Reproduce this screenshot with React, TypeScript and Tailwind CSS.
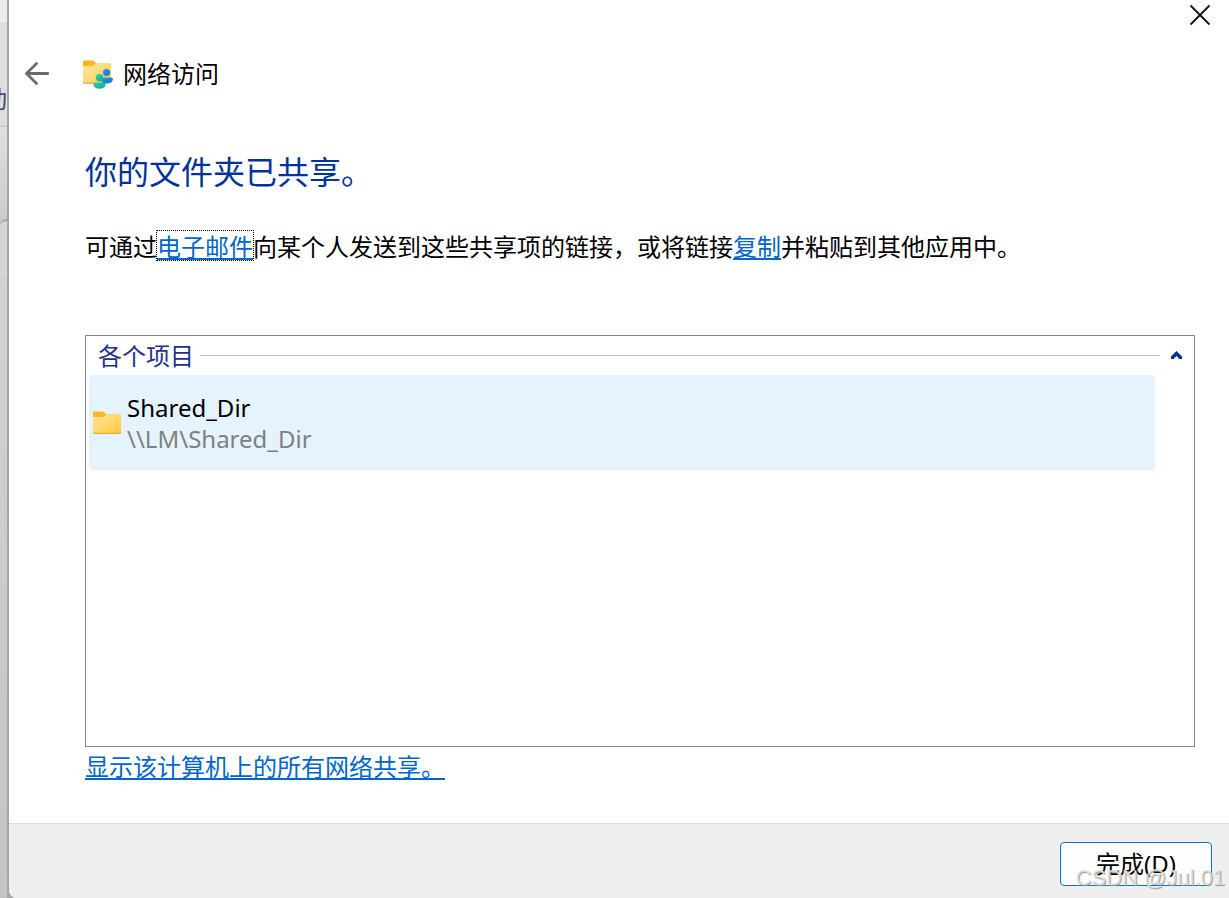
import React from 'react';

function SharedFolderIcon() {
  return (
    <svg viewBox="0 0 31 29" className="h-[29px] w-[31px] shrink-0" aria-hidden="true">
      <defs>
        <linearGradient id="sharedFront" x1="0" y1="0" x2="1" y2="1">
          <stop offset="0" stopColor="#ffe9a6" />
          <stop offset="1" stopColor="#fdcb4c" />
        </linearGradient>
        <linearGradient id="teal" x1="0" y1="0" x2="1" y2="1">
          <stop offset="0" stopColor="#2fd3a5" />
          <stop offset="1" stopColor="#14a493" />
        </linearGradient>
        <linearGradient id="azure" x1="0" y1="0" x2="1" y2="1">
          <stop offset="0" stopColor="#2b9cf0" />
          <stop offset="1" stopColor="#0a72cf" />
        </linearGradient>
      </defs>
      <path d="M0 1.5Q0 .5 1 .5H9.5Q10.500 .5 11.200 1.300L13 3.500H27Q28 3.500 28 4.500V10H0Z" fill="#fbb71c" />
      <path d="M0 6H9.500Q10.500 6 11.300 5.200L12.200 4.200Q12.900 3.500 14 3.500H27Q28 3.500 28 4.500V22Q28 23 27 23H1Q0 23 0 22Z" fill="url(#sharedFront)" />
      <path d="M0 22Q0 23.200 1 23.200H12" fill="none" stroke="#d89b2b" strokeWidth="1" />
      <circle cx="23.500" cy="12.500" r="3.600" fill="url(#azure)" />
      <path d="M17.500 19.500Q17.500 17.500 19.500 17.500H28Q30 17.500 30 19.500Q29 23.500 23.700 23.500Q18.500 23.500 17.500 19.500Z" fill="url(#azure)" />
      <circle cx="16.500" cy="17.700" r="3.700" fill="url(#teal)" />
      <path d="M10.200 24.500Q10.200 22.500 12.200 22.500H20.800Q22.800 22.500 22.800 24.500Q21.500 28.800 16.500 28.800Q11.500 28.800 10.200 24.500Z" fill="url(#teal)" />
    </svg>
  );
}

function FolderIcon() {
  return (
    <svg viewBox="0 0 28 23" className="h-[23px] w-7 shrink-0" aria-hidden="true">
      <defs>
        <linearGradient id="front" x1="0" y1="0" x2="1" y2="1">
          <stop offset="0" stopColor="#ffe69c" />
          <stop offset="1" stopColor="#ffc93a" />
        </linearGradient>
      </defs>
      <path d="M0 1.500Q0 .5 1 .5H9.500Q10.500 .5 11.200 1.300L13 3.500H27Q28 3.500 28 4.500V9H0Z" fill="#fbb71c" />
      <path d="M0 6H9.500Q10.500 6 11.300 5.200L12.200 4.200Q12.900 3.500 14 3.500H27Q28 3.500 28 4.500V21.500Q28 22.500 27 22.500H1Q0 22.500 0 21.500Z" fill="url(#front)" />
      <path d="M0 21Q0 22.400 1 22.400H27Q28 22.400 28 21" fill="none" stroke="#e2a526" strokeWidth="1" />
    </svg>
  );
}

function BackgroundStrip() {
  return (
    <div className="flex w-[7px] shrink-0 flex-col overflow-hidden bg-[#c8c8c8]" aria-hidden="true">
      <div className="h-[22px] shrink-0 bg-[#ececec]" />
      <div className="flex h-[105px] shrink-0 items-end justify-end border-b-2 border-[#cdcdcd] bg-[#dedede] pb-2">
        <span className="text-2xl leading-9 text-[#4a4a68]">动</span>
      </div>
      <div className="h-[92px] shrink-0 bg-linear-to-b from-[#dde1e4] to-[#c9cccd]" />
      <div className="h-14 shrink-0 rounded-tl-lg border-t-2 border-[#a2a2a2] bg-[#d6d6d6]" />
      <div className="flex-1 bg-linear-to-b from-[#d2d2d2] to-[#c4c4c4]" />
    </div>
  );
}

export default function App() {
  return (
    <div className="flex min-h-screen overflow-hidden bg-[#a6a6a6] font-['Noto_Sans','Noto_Sans_CJK_SC',sans-serif] text-black">
      <BackgroundStrip />
      <main className="ml-0.5 flex min-w-0 flex-1 flex-col overflow-hidden rounded-bl-lg bg-white">
        <div className="flex h-[30px] justify-end pr-[18px]">
          <button type="button" aria-label="关闭" className="flex items-center justify-center">
            <svg viewBox="0 0 22 22" className="size-[22px]" fill="none" stroke="#111" strokeWidth="1.800">
              <path d="M1.500 1.500 20.500 20.500M20.500 1.500 1.500 20.500" />
            </svg>
          </button>
        </div>
        <header className="mt-6 flex h-10 items-center pl-4">
          <button type="button" aria-label="返回" className="mr-[33px] flex">
            <svg viewBox="0 0 25 24" className="h-6 w-[25px]" fill="none" stroke="#6b6b6b" strokeWidth="2.800" strokeLinecap="round" strokeLinejoin="round">
              <path d="M11.500 1.500 1.500 11.500 11.500 21.500M1.500 11.500H22.800" />
            </svg>
          </button>
          <SharedFolderIcon />
          <span className="ml-[9px] text-2xl">网络访问</span>
        </header>

        <section className="flex flex-1 flex-col pr-[34px] pl-[76px]">
          <h1 className="mt-[52px] font-['Noto_Sans_CJK_SC',sans-serif] text-[32px] leading-12 text-[#003399]">你的文件夹已共享。</h1>
          <p className="mt-[34px] font-['Noto_Sans_CJK_SC',sans-serif] text-2xl leading-9">
            可通过
            <a href="#email" className="inline-block leading-[29px] text-[#0066cc] underline decoration-2 underline-offset-2 outline-1 outline-black outline-dotted">电子邮件</a>
            向某个人发送到这些共享项的链接，或将链接
            <a href="#copy" className="text-[#0066cc] underline decoration-2 underline-offset-2">复制</a>
            并粘贴到其他应用中。
          </p>

          <div className="mt-[71px] flex min-h-[412px] flex-col border border-[#828790] pl-[3px]">
            <div className="flex h-[39px] items-center pr-3 pl-[9px]">
              <h2 className="text-2xl text-[#1e3287]">各个项目</h2>
              <div className="ml-1.5 h-px flex-1 bg-[#b0bfde]" />
              <button type="button" aria-label="折叠" className="ml-[11px] flex">
                <svg viewBox="0 0 11 9" className="h-[9px] w-[11px]" fill="#003399">
                  <path d="M5.500 0 11 5.500V8H8.500L5.500 5 2.500 8H0V5.500Z" />
                </svg>
              </button>
            </div>
            <ul className="mr-[39px]">
              <li className="flex h-[95px] items-center rounded-sm bg-[#e5f3ff] pl-1">
                <FolderIcon />
                <div className="ml-1.5 text-2xl leading-[31px]">
                  <div>Shared_Dir</div>
                  <div className="text-[#808080]">\\LM\Shared_Dir</div>
                </div>
              </li>
            </ul>
          </div>
          <a href="#shares" className="mt-px self-start font-['Noto_Sans_CJK_SC',sans-serif] text-2xl leading-9 text-[#0066cc] underline decoration-2 underline-offset-2">显示该计算机上的所有网络共享。</a>
        </section>

        <footer className="relative flex h-[75px] shrink-0 justify-end border-t border-[#dfdfdf] bg-[#efefef] pt-[18px] pr-[17px]">
          <button type="button" className="h-11 w-38 rounded-sm border border-[#0078d4] bg-[#fdfdfd] text-2xl">完成(D)</button>
          <span className="pointer-events-none absolute right-1 bottom-1 font-['Liberation_Sans',sans-serif] text-[22px] leading-8 text-[#e6e6e6]/80 [text-shadow:1px_1px_1px_#999]">CSDN @Jul.01</span>
        </footer>
      </main>
    </div>
  );
}
